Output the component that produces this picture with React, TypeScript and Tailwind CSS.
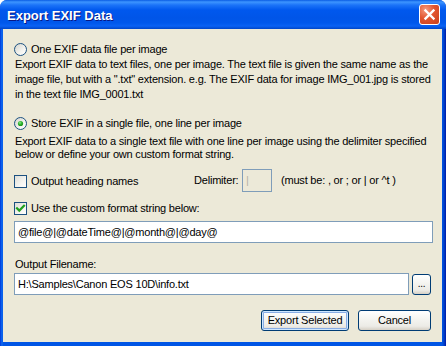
import React from "react";

function Radio({ checked, id }: { checked?: boolean; id: string }) {
  return (
    <svg width="13" height="13" viewBox="0 0 13 13" className="shrink-0">
      <defs>
        <linearGradient id={id} x1="0" y1="0" x2="1" y2="1">
          <stop offset="0" stopColor="#D3D2CA" />
          <stop offset="0.6" stopColor="#F4F4F0" />
          <stop offset="1" stopColor="#FFFFFF" />
        </linearGradient>
        <radialGradient id={id + "d"} cx="0.4" cy="0.35" r="0.7">
          <stop offset="0" stopColor="#8CE88C" />
          <stop offset="0.5" stopColor="#2FB52F" />
          <stop offset="1" stopColor="#158A15" />
        </radialGradient>
      </defs>
      <circle cx="6.5" cy="6.5" r="6" fill={`url(#${id})`} stroke="#1C5180" strokeWidth="1" />
      {checked && <circle cx="6.5" cy="6.5" r="2.6" fill={`url(#${id}d)`} />}
    </svg>
  );
}

function Check({ checked, id }: { checked?: boolean; id: string }) {
  return (
    <svg width="13" height="13" viewBox="0 0 13 13" className="shrink-0">
      <defs>
        <linearGradient id={id} x1="0" y1="0" x2="1" y2="1">
          <stop offset="0" stopColor="#DCDCD5" />
          <stop offset="0.6" stopColor="#F5F5F1" />
          <stop offset="1" stopColor="#FFFFFF" />
        </linearGradient>
      </defs>
      <rect x="0.5" y="0.5" width="12" height="12" fill={`url(#${id})`} stroke="#1C5180" strokeWidth="1" />
      {checked && (
        <path d="M3 6.2 L5.3 8.6 L10 3.8" fill="none" stroke="#21A121" strokeWidth="2.2" strokeLinecap="square" />
      )}
    </svg>
  );
}

function XPButton({
  children,
  def,
  className,
}: {
  children: React.ReactNode;
  def?: boolean;
  className?: string;
}) {
  return (
    <div
      className={
        "flex items-center justify-center rounded-[3px] border border-[#003C74] bg-[linear-gradient(to_bottom,#FFFFFF_0%,#F4F4F0_45%,#ECEBE6_80%,#D6D0C5_100%)] " +
        (def ? "shadow-[inset_0_0_0_1px_#CEE7FF,inset_0_0_0_2px_#89ADE4] " : "") +
        (className ?? "")
      }
    >
      {children}
    </div>
  );
}

export default function App() {
  return (
    <div className="h-[346px] w-[446px] bg-white font-['Liberation_Sans',Arial,sans-serif] text-[11px] tracking-[-0.2px] text-black">
      <div className="flex h-full flex-col overflow-hidden rounded-t-[7px] bg-[linear-gradient(to_right,#0831D9_0px,#0055E5_1px,#166CF2_2px,#0055E5_3px,#0055E5_442px,#0041C8_444px,#0019A8_446px)]">
        {/* Title bar */}
        <div className="flex h-[29px] shrink-0 items-center bg-[linear-gradient(to_bottom,#0A5CE4_0px,#3D95FF_2px,#1C74F8_5px,#0058EE_10px,#0055E8_18px,#0058EC_23px,#0A62F4_26px,#0046C8_29px)] pl-[7px] pr-[6px]">
          <div className="flex-1 pt-[2px] text-[13px] font-bold tracking-normal text-white [text-shadow:1px_1px_#0A1883]">
            Export EXIF Data
          </div>
          <div className="flex h-[21px] w-[21px] items-center justify-center rounded-[3px] border border-white bg-[radial-gradient(circle_at_30%_25%,#F59A7E_0%,#E2552F_45%,#C9401B_100%)]">
            <svg width="13" height="13" viewBox="0 0 13 13">
              <path d="M2.5 2.5 L10.5 10.5 M10.5 2.5 L2.5 10.5" stroke="white" strokeWidth="2.4" strokeLinecap="square" />
            </svg>
          </div>
        </div>

        {/* Body */}
        <div className="mb-[4px] ml-[3px] mr-[4px] flex flex-1 flex-col bg-[#ECE9D8] pl-[11px] pr-[9px]">
          <div className="mt-[13px] flex h-[14px] items-center gap-[4px]">
            <Radio id="r1" />
            <span>One EXIF data file per image</span>
          </div>
          <div className="mt-[1px] pl-[1px] leading-[15px]">
            Export EXIF data to text files, one per image. The text file is given the same name as the
            <br />
            image file, but with a ".txt" extension. e.g. The EXIF data for image IMG_001.jpg is stored
            <br />
            in the text file IMG_0001.txt
          </div>

          <div className="mt-[14px] flex h-[14px] items-center gap-[4px]">
            <Radio id="r2" checked />
            <span>Store EXIF in a single file, one line per image</span>
          </div>
          <div className="mt-[5px] pl-[1px] leading-[13px]">
            Export EXIF data to a single text file with one line per image using the delimiter specified
            <br />
            below or define your own custom format string.
          </div>

          <div className="mt-[8px] flex h-[23px] items-center">
            <div className="flex w-[180px] items-center gap-[4px] pt-[2px]">
              <Check id="c1" />
              <span>Output heading names</span>
            </div>
            <span className="w-[48px]">Delimiter:</span>
            <div className="flex h-[23px] w-[30px] items-center border border-[#7F9DB9] bg-[#ECE9D8] pl-[3px] text-[#B5B2A6]">
              |
            </div>
            <span className="ml-[9px]">(must be: , or ; or | or ^t )</span>
          </div>

          <div className="mt-[9px] flex h-[14px] items-center gap-[4px]">
            <Check id="c2" checked />
            <span>Use the custom format string below:</span>
          </div>

          <div className="mt-[6px] flex h-[22px] items-center border border-[#7F9DB9] bg-white pl-[3px]">
            @file@|@dateTime@|@month@|@day@
          </div>

          <div className="mt-[14px] h-[14px] pl-[1px] leading-[14px]">Output Filename:</div>

          <div className="mr-[2px] mt-[2px] flex h-[22px] items-end gap-[3px]">
            <div className="flex h-[22px] flex-1 items-center border border-[#7F9DB9] bg-white pl-[3px]">
              H:\Samples\Canon EOS 10D\info.txt
            </div>
            <XPButton className="h-[21px] w-[19px] pb-[3px] text-[10px]">...</XPButton>
          </div>

          <div className="mr-[2px] mt-[15px] flex justify-end gap-[9px]">
            <XPButton def className="h-[21px] w-[88px] text-[11px]">
              Export Selected
            </XPButton>
            <XPButton className="h-[21px] w-[73px]">Cancel</XPButton>
          </div>
        </div>
      </div>
    </div>
  );
}
